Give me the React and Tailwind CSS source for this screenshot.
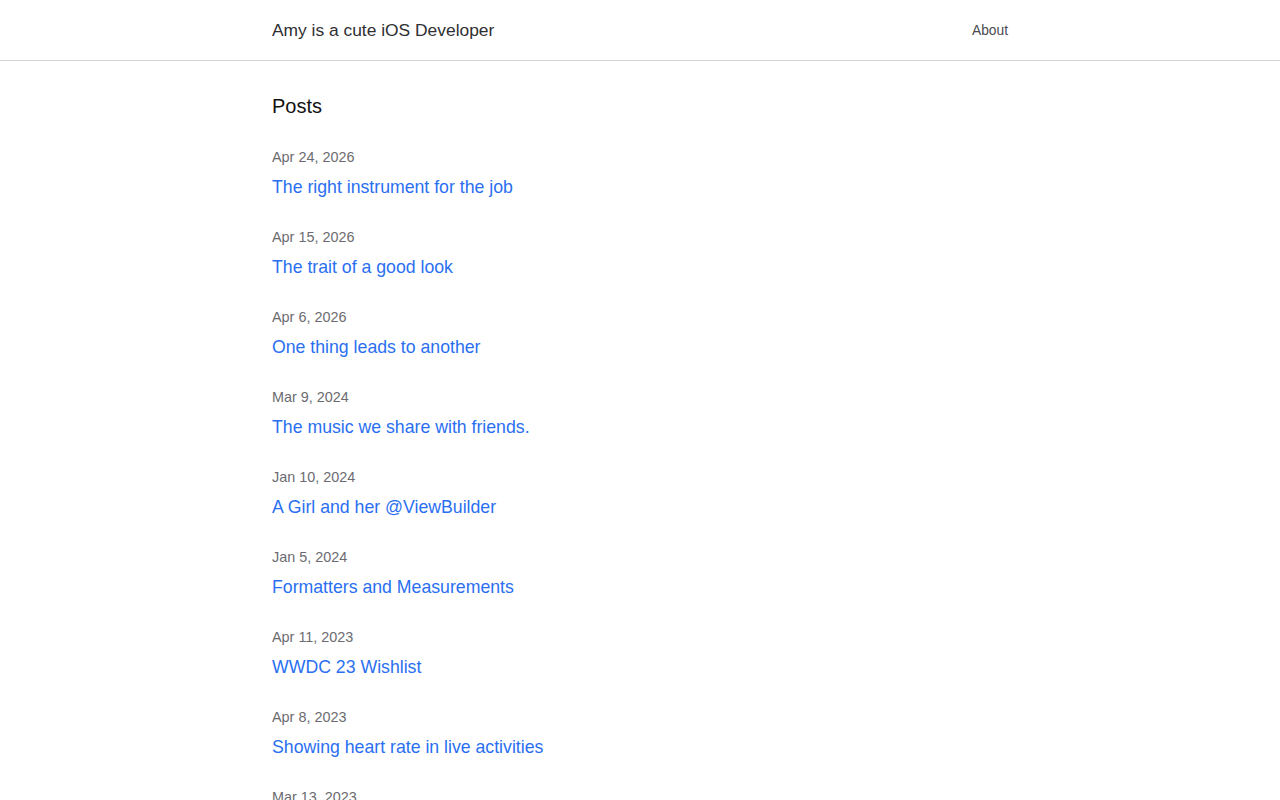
import React from "react";

const posts = [
  ["Apr 24, 2026", "The right instrument for the job"],
  ["Apr 15, 2026", "The trait of a good look"],
  ["Apr 6, 2026", "One thing leads to another"],
  ["Mar 9, 2024", "The music we share with friends."],
  ["Jan 10, 2024", "A Girl and her @ViewBuilder"],
  ["Jan 5, 2024", "Formatters and Measurements"],
  ["Apr 11, 2023", "WWDC 23 Wishlist"],
  ["Apr 8, 2023", "Showing heart rate in live activities"],
  ["Mar 13, 2023", "Something else"],
];

export default function App() {
  return (
    <div className="min-h-screen bg-white text-[#111] font-['Liberation_Sans',Arial,sans-serif]">
      <header className="h-[61px] border-b border-[#d4d4d8]">
        <div className="mx-auto flex h-[60px] max-w-[736px] items-center justify-between">
          <a className="text-[17.4px] text-[#2f2f33]">Amy is a cute iOS Developer</a>
          <nav>
            <a className="text-[13.8px] text-[#4b4b50]">About</a>
          </nav>
        </div>
      </header>
      <main className="mx-auto max-w-[736px] pt-[31px]">
        <h2 className="text-[20px] leading-[28px] text-[#111]">Posts</h2>
        <ul className="mt-[27px] flex flex-col gap-[28px]">
          {posts.map(([d, t]) => (
            <li key={d} className="flex flex-col">
              <span className="text-[14.4px] leading-[20px] text-[#6b6b70]">{d}</span>
              <a className="mt-[8px] text-[17.7px] leading-[24px] text-[#2a6ff0]">{t}</a>
            </li>
          ))}
        </ul>
      </main>
    </div>
  );
}
